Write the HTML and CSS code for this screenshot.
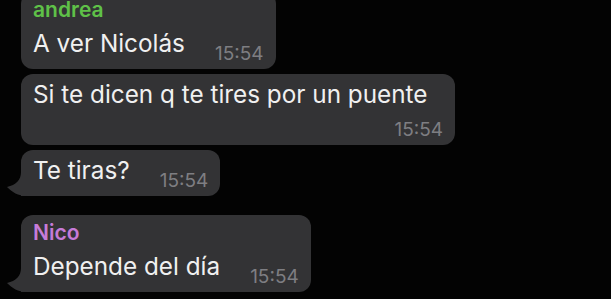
FILE: index.html
```html
<!DOCTYPE html>
<html lang="es">
<head>
    <meta charset="UTF-8">
    <meta name="viewport" content="width=device-width, initial-scale=1.0">
    <title>Chat</title>
    <link rel="stylesheet" href="styles.css">
</head>
<body>
    <!-- Conversación -->
    <main class="chat">
        <div class="msg">
            <div class="msg-name name-green">andrea</div>
            <div class="msg-body">
                <span class="msg-text">A ver Nicolás</span>
                <span class="msg-time">15:54</span>
            </div>
        </div>

        <div class="msg">
            <div class="msg-body">
                <span class="msg-text">Si te dicen q te tires por un puente</span>
                <span class="msg-time">15:54</span>
            </div>
        </div>

        <div class="msg has-tail">
            <div class="msg-body">
                <span class="msg-text">Te tiras?</span>
                <span class="msg-time">15:54</span>
            </div>
            <svg class="tail" width="22" height="24" viewBox="0 0 22 24"><path d="M16 0 C16 8 11 13 2 15 C7 20 13 24 22 24 L22 0 Z"/></svg>
        </div>

        <div class="msg has-tail group-start">
            <div class="msg-name name-violet">Nico</div>
            <div class="msg-body">
                <span class="msg-text">Depende del día</span>
                <span class="msg-time">15:54</span>
            </div>
            <svg class="tail" width="22" height="24" viewBox="0 0 22 24"><path d="M16 0 C16 8 11 13 2 15 C7 20 13 24 22 24 L22 0 Z"/></svg>
        </div>
    </main>
</body>
</html>
```

FILE: styles.css
```css
/* Colores */
:root {
    --bg: #030303;
    --bubble-bg: #333335;
    --text-primary: #f0f0f0;
    --text-time: #7e7e82;
    --name-green: #5fc148;
    --name-violet: #c67bd8;
}

body {
    margin: 0;
    background-color: var(--bg);
    font-family: 'Inter', 'Noto Sans', sans-serif;
    color: var(--text-primary);
    overflow: hidden;
}

/* Lista de mensajes */
.chat {
    display: flex;
    flex-direction: column;
    align-items: flex-start;
    gap: 5px;
    padding-left: 21px;
    margin-top: -8px;
}

.msg {
    position: relative;
    box-sizing: border-box;
    max-width: 434px;
    background-color: var(--bubble-bg);
    border-radius: 12px;
    padding: 5px 12px 4px;
}

.msg.has-tail {
    border-bottom-left-radius: 0;
}

.msg.group-start {
    margin-top: 14px;
}

.msg .tail {
    position: absolute;
    left: -16px;
    bottom: 0;
    fill: var(--bubble-bg);
}

.msg-name {
    font-size: 21px;
    line-height: 25px;
    font-weight: 600;
    margin-bottom: 6px;
}

.name-green {
    color: var(--name-green);
}

.name-violet {
    color: var(--name-violet);
}

.msg-body {
    display: flex;
    flex-wrap: wrap;
    justify-content: flex-end;
    align-items: flex-end;
    column-gap: 30px;
    row-gap: 3px;
}

.msg-text {
    flex-grow: 1;
    font-size: 24.3px;
    line-height: 30px;
    margin-bottom: 7px;
}

.msg-time {
    font-size: 19px;
    line-height: 22px;
    color: var(--text-time);
}
```
